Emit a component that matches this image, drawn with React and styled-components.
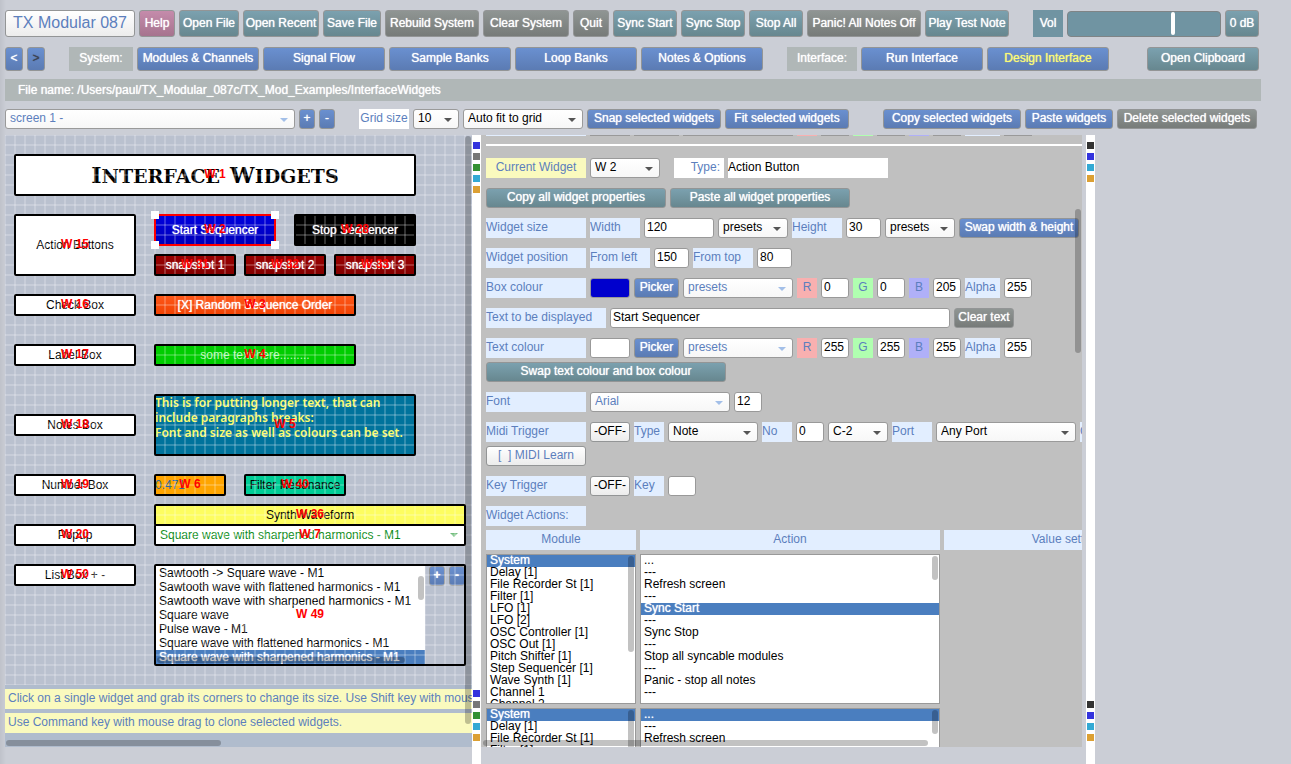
import React from "react";
import styled, { createGlobalStyle, css } from "styled-components";

const GlobalStyle = createGlobalStyle`
  *, *::before, *::after { box-sizing: border-box; }
  body {
    margin: 0;
    background: #cbced6;
    font-family: "Liberation Sans", Arial, sans-serif;
    font-size: 12px;
    color: #000;
  }
  button, input, select { font: inherit; color: inherit; margin: 0; }
`;

const tones = {
  blue: "linear-gradient(#6a90d0, #5b7bb3)",
  teal: "linear-gradient(#7ba1af, #67878f)",
  grey: "linear-gradient(#8f9593, #777b79)",
  pink: "linear-gradient(#c58bab, #a6738e)",
  white: "linear-gradient(#ffffff, #ececec)",
};

const accent = "#5c7fbd";
const heavier = css`text-shadow: 0 0 1px currentColor;`;

const Page = styled.div`
  display: flex;
  flex-direction: column;
  height: 100vh;
  padding: 10px 0 0 5px;
  overflow: hidden;
  background: linear-gradient(90deg, #bfc2ca, #cbced6 6px);
`;

const Toolbar = styled.div`
  display: flex;
  flex: none;
  gap: 4px;
  height: ${(p) => p.$height}px;
  margin-bottom: ${(p) => p.$after}px;
`;

const Button = styled.button`
  flex: none;
  width: ${(p) => p.$w}px;
  padding: 0 0 2px;
  border: 1px solid #939596;
  border-radius: 3px;
  background: ${(p) => tones[p.$tone || "blue"]};
  color: ${(p) => p.$color || "#fff"};
  text-align: center;
  white-space: nowrap;
  overflow: hidden;
  ${(p) => !p.$plain && heavier}
`;

const TitleButton = styled(Button)`
  font-size: 16px;
`;

const BarLabel = styled.span`
  display: flex;
  flex: none;
  align-items: center;
  justify-content: center;
  width: ${(p) => p.$w}px;
  margin-left: 20px;
  padding-bottom: 2px;
  background: ${(p) => p.$bg || "#b0b7b7"};
  color: ${(p) => p.$color || "#fff"};
  white-space: nowrap;
  ${(p) => !p.$plain && heavier}
`;

const Spacer = styled.span`
  flex: none;
  width: ${(p) => p.$w}px;
`;

const Volume = styled.input`
  flex: none;
  appearance: none;
  align-self: center;
  width: 154px;
  height: 26px;
  padding: 1px;
  border: 1px solid #7f8486;
  border-radius: 4px;
  background: #7094a2;
  &::-webkit-slider-thumb {
    appearance: none;
    width: 4px;
    height: 23px;
    border-radius: 2px;
    background: #fff;
  }
`;

const FileBar = styled.div`
  flex: none;
  height: 22px;
  margin: 0 30px 8px 0;
  padding-left: 13px;
  line-height: 22px;
  background: #b0b7b7;
  color: #fff;
  ${heavier}
`;

const SelectBox = styled.span`
  position: relative;
  display: flex;
  flex: none;
  width: ${(p) => p.$w}px;
  color: ${(p) => (p.$soft ? accent : "#000")};
  &::after {
    content: "";
    position: absolute;
    right: 7px;
    top: 50%;
    border: 4px solid transparent;
    border-top-color: ${(p) => (p.$soft ? "#a3bfe8" : "#555")};
    border-bottom-width: 0;
    margin-top: -1px;
    pointer-events: none;
  }
`;

const NativeSelect = styled.select`
  appearance: none;
  width: 100%;
  height: 20px;
  padding: 0 0 2px 4px;
  border: 1px solid #9a9a9a;
  border-radius: 3px;
  background: linear-gradient(#fff, #f7f7f7);
`;

function Select({ w, soft, label, id, value }) {
  return (
    <SelectBox $w={w} $soft={soft}>
      <NativeSelect id={id} aria-label={label} defaultValue={value}>
        <option>{value}</option>
      </NativeSelect>
    </SelectBox>
  );
}

/* ---------- workspace ---------- */

const Workspace = styled.main`
  display: grid;
  flex: 1;
  min-height: 0;
  grid-template-columns: minmax(0, 467fr) 9px minmax(0, 605fr) 9px;
  margin-right: 196px;
`;

const Rail = styled.div`
  display: flex;
  flex-direction: column;
  justify-content: space-between;
  padding: 7px 1px 23px;
  background: #fff;
`;

const Marks = styled.div`
  display: flex;
  flex-direction: column;
  gap: 4px;
`;

const Mark = styled.button`
  width: 7px;
  height: 7px;
  padding: 0;
  border: 0;
  background: ${(p) => p.$color};
`;

function SideRail({ colors }) {
  return (
    <Rail>
      {["top", "bottom"].map((end) => (
        <Marks key={end}>
          {colors.map((c) => (
            <Mark key={c} $color={c} aria-label={`Scroll mark ${end}`} />
          ))}
        </Marks>
      ))}
    </Rail>
  );
}

const Thumb = styled.div`
  position: absolute;
  z-index: 4;
  border-radius: 3px;
  background: rgba(0, 0, 0, 0.24);
`;

const VThumb = styled(Thumb)`
  right: 1px;
  top: ${(p) => p.$top}px;
  width: 6px;
  height: ${(p) => p.$length}px;
`;

const HThumb = styled(Thumb)`
  left: ${(p) => p.$left}px;
  bottom: 1px;
  width: ${(p) => p.$length}px;
  height: 6px;
`;

/* ---------- widget canvas ---------- */

const CanvasPanel = styled.section`
  position: relative;
  display: flex;
  flex-direction: column;
  gap: 4px;
  margin-bottom: 17px;
  overflow: hidden;
  background: #b0bccd;
`;

const Canvas = styled.div`
  position: relative;
  flex: none;
  height: 550px;
  background: #bac1cf;
`;

const GridLines = styled.div`
  position: absolute;
  inset: 0;
  z-index: 1;
  pointer-events: none;
  background-image: linear-gradient(rgba(255, 255, 255, 0.2) 2px, transparent 2px),
    linear-gradient(90deg, rgba(255, 255, 255, 0.2) 2px, transparent 2px);
  background-size: 10px 10px;
  background-position: -1px -1px;
`;

const placed = css`
  position: absolute;
  left: ${(p) => p.$x - 1}px;
  top: ${(p) => p.$y - 1}px;
  width: ${(p) => p.$w + 2}px;
  height: ${(p) => p.$h + 2}px;
`;

const WidgetBody = styled.div`
  ${placed}
  display: flex;
  align-items: center;
  justify-content: ${(p) => p.$justify || "center"};
  padding: 0 1px;
  border: 0;
  border-radius: 2px;
  background: ${(p) => p.$bg};
  color: ${(p) => p.$color || "#000"};
  white-space: nowrap;
`;

const ActionBody = styled(WidgetBody).attrs({ as: "button" })`
  ${heavier}
`;

const WidgetFrame = styled.div`
  ${placed}
  z-index: 2;
  display: flex;
  align-items: center;
  justify-content: center;
  border: 2px solid ${(p) => (p.$selected ? "#f00" : "#000")};
  border-radius: 2px;
  padding-bottom: 2px;
  color: #f00;
  font-weight: bold;
  pointer-events: none;
`;

const Handle = styled.i`
  position: absolute;
  ${(p) => p.$v}: -5px;
  ${(p) => p.$s}: -5px;
  width: 8px;
  height: 8px;
  background: #fff;
`;

const Heading = styled.h1`
  display: flex;
  gap: 10px;
  margin: 0;
  font: bold 19px "DejaVu Serif", serif;
  text-transform: uppercase;
`;

const HeadingWord = styled.span`
  display: block;
  &::first-letter { font-size: 22px; }
`;

const Notes = styled.p`
  align-self: flex-start;
  width: 100%;
  margin: 1px 0 0;
  font: 600 12px/15px "Noto Sans", sans-serif;
  white-space: pre-line;
`;

const PopupValue = styled.span`
  display: flex;
  flex: 1;
  align-items: center;
  justify-content: space-between;
  padding: 0 7px 0 5px;
  &::after {
    content: "";
    border: 4px solid transparent;
    border-top-color: #72bd7d;
    border-bottom-width: 0;
  }
`;

const WaveArea = styled.div`
  display: flex;
  align-items: flex-start;
  gap: 4px;
  width: 100%;
  height: 100px;
  padding-top: 1px;
`;

const WaveList = styled.ul`
  position: relative;
  flex: 1;
  height: 98px;
  margin: 0;
  padding: 0;
  overflow: hidden;
  list-style: none;
  background: #fff;
`;

const WaveItem = styled.li`
  height: 14px;
  padding-left: 4px;
  line-height: 14px;
  white-space: nowrap;
  background: ${(p) => (p.$on ? "#4a7ebf" : "transparent")};
  color: ${(p) => (p.$on ? "#fff" : "#000")};
  ${(p) => p.$on && heavier}
`;

const StepButton = styled(Button)`
  height: 20px;
  font-weight: bold;
`;

const waves = [
  "Sawtooth -> Square wave - M1",
  "Sawtooth wave with flattened harmonics - M1",
  "Sawtooth wave with sharpened harmonics - M1",
  "Square wave",
  "Pulse wave - M1",
  "Square wave with flattened harmonics - M1",
  "Square wave with sharpened harmonics - M1",
];

const darkRed = "linear-gradient(#9b0000, #820000)";

const widgets = [
  {
    id: "W 1", x: 10, y: 20, w: 400, h: 40, bg: "#fff",
    body: <Heading><HeadingWord>Interface</HeadingWord><HeadingWord>Widgets</HeadingWord></Heading>,
  },
  { id: "W 15", x: 10, y: 80, w: 120, h: 60, bg: "#fff", body: "Action Buttons" },
  { id: "W 2", x: 150, y: 80, w: 120, h: 30, bg: "linear-gradient(#0000e0, #0000b8)", color: "#fff", action: true, selected: true, body: "Start Sequencer" },
  { id: "W 28", x: 290, y: 80, w: 120, h: 30, bg: "#000", color: "#fff", action: true, body: "Stop Sequencer" },
  { id: "W 31", x: 150, y: 120, w: 80, h: 20, bg: darkRed, color: "#fff", action: true, body: "snapshot 1" },
  { id: "W 32", x: 240, y: 120, w: 80, h: 20, bg: darkRed, color: "#fff", action: true, body: "snapshot 2" },
  { id: "W 33", x: 330, y: 120, w: 80, h: 20, bg: darkRed, color: "#fff", action: true, body: "snapshot 3" },
  { id: "W 16", x: 10, y: 160, w: 120, h: 20, bg: "#fff", body: "Check Box" },
  { id: "W 3", x: 150, y: 160, w: 200, h: 20, bg: "linear-gradient(#ff5a1c, #f04000)", color: "#fff", action: true, body: "[X] Random Sequence Order" },
  { id: "W 17", x: 10, y: 210, w: 120, h: 20, bg: "#fff", body: "Label Box" },
  { id: "W 4", x: 150, y: 210, w: 200, h: 20, bg: "#00cd00", color: "#b8f5b8", body: "some text here........." },
  { id: "W 18", x: 10, y: 280, w: 120, h: 20, bg: "#fff", body: "Notes Box" },
  {
    id: "W 5", x: 150, y: 260, w: 260, h: 60, bg: "#00739c", color: "#fbfb6a",
    body: <Notes>{"This is for putting longer text, that can\ninclude paragraphs breaks:\nFont and size as well as colours can be set."}</Notes>,
  },
  { id: "W 19", x: 10, y: 340, w: 120, h: 20, bg: "#fff", body: "Number Box" },
  { id: "W 6", x: 150, y: 340, w: 70, h: 20, bg: "#ffa500", color: "#2c6aa0", justify: "flex-start", body: "0.471" },
  { id: "W 40", x: 240, y: 340, w: 100, h: 20, bg: "#00cd96", body: "Filter Resonance" },
  { id: "W 20", x: 10, y: 390, w: 120, h: 20, bg: "#fff", body: "Popup" },
  { id: "W 36", x: 150, y: 370, w: 310, h: 20, bg: "#fdfd60", body: "Synth Waveform" },
  { id: "W 7", x: 150, y: 390, w: 310, h: 20, bg: "#fff", color: "#0a8a14", body: <PopupValue>Square wave with sharpened harmonics - M1</PopupValue> },
  { id: "W 50", x: 10, y: 430, w: 120, h: 20, bg: "#fff", body: "List Box + -" },
  {
    id: "W 49", x: 150, y: 430, w: 310, h: 100, bg: "transparent",
    body: (
      <WaveArea>
        <WaveList role="listbox" aria-label="Synth waveform">
          {waves.map((name, i) => (
            <WaveItem key={name} role="option" aria-selected={i === 6} $on={i === 6}>{name}</WaveItem>
          ))}
          <VThumb $top={10} $length={24} />
          <HThumb $left={2} $length={248} />
        </WaveList>
        <StepButton $w={16}>+</StepButton>
        <StepButton $w={16}>-</StepButton>
      </WaveArea>
    ),
  },
];

const Hint = styled.p`
  flex: none;
  height: 20px;
  margin: 0;
  padding-left: 3px;
  line-height: 18px;
  white-space: nowrap;
  overflow: hidden;
  background: #fafabe;
  color: ${accent};
`;

function WidgetCanvas() {
  return (
    <CanvasPanel>
      <Canvas>
        {widgets.map((w) => {
          const Body = w.action ? ActionBody : WidgetBody;
          return (
            <Body
              key={w.id}
              $x={w.x} $y={w.y} $w={w.w} $h={w.h}
              $bg={w.bg} $color={w.color} $justify={w.justify}
            >
              {w.body}
            </Body>
          );
        })}
        <GridLines />
        {widgets.map((w) => (
          <WidgetFrame key={w.id} $x={w.x} $y={w.y} $w={w.w} $h={w.h} $selected={w.selected}>
            {w.id}
            {w.selected && (
              <>
                <Handle $v="top" $s="left" />
                <Handle $v="top" $s="right" />
                <Handle $v="bottom" $s="left" />
                <Handle $v="bottom" $s="right" />
              </>
            )}
          </WidgetFrame>
        ))}
      </Canvas>
      <Hint>Click on a single widget and grab its corners to change its size. Use Shift key with mouse to select several.</Hint>
      <Hint>Use Command key with mouse drag to clone selected widgets.</Hint>
      <VThumb $top={1} $length={588} />
      <HThumb $left={1} $length={215} />
    </CanvasPanel>
  );
}

/* ---------- properties panel ---------- */

const PropertiesPanel = styled.section`
  position: relative;
  margin: 0 4px 17px 0;
  padding-left: 5px;
  overflow: hidden;
  background: #c0c0c0;
`;

const CutRow = styled.div`
  display: flex;
  gap: 4px;
  height: 1px;
  margin-bottom: 8px;
`;

const Cut = styled.span`
  flex: none;
  width: ${(p) => p.$w}px;
  background: ${(p) => p.$bg || "#999"};
`;

const Divider = styled.hr`
  height: 2px;
  margin: 0 0 12px;
  border: 0;
  background: #fff;
`;

const Row = styled.div`
  display: flex;
  gap: 4px;
  height: 20px;
  margin-bottom: ${(p) => (p.$tight ? 4 : 10)}px;
`;

const FieldLabel = styled.label`
  flex: none;
  width: ${(p) => p.$w || 100}px;
  line-height: 18px;
  text-align: ${(p) => p.$align || "left"};
  background: ${(p) => p.$bg || "#e2eeff"};
  color: ${accent};
  white-space: nowrap;
`;

const TypeLabel = styled(FieldLabel)`
  margin-left: 10px;
  padding-right: 4px;
`;

const Value = styled.output`
  flex: none;
  width: 160px;
  line-height: 18px;
  background: #fff;
`;

const Input = styled.input`
  flex: none;
  width: ${(p) => p.$w}px;
  height: 20px;
  padding: 0 0 2px 2px;
  border: 1px solid #999;
  border-radius: 3px;
  background: #fff;
`;

const Swatch = styled.input`
  appearance: none;
  flex: none;
  width: 40px;
  height: 20px;
  padding: 0;
  border: 1px solid #999;
  border-radius: 3px;
  background: #fff;
  overflow: hidden;
  &::-webkit-color-swatch-wrapper { padding: 0; }
  &::-webkit-color-swatch { border: 0; }
`;

const ListHead = styled(FieldLabel).attrs({ as: "span" })`
  text-align: center;
`;

const ListBox = styled.ul`
  position: relative;
  flex: none;
  width: ${(p) => p.$w}px;
  height: 150px;
  margin: 0;
  padding: 0;
  border: 1px solid #999;
  overflow: hidden;
  list-style: none;
  background: #fff;
`;

const ListItem = styled.li`
  height: 12px;
  padding-left: 3px;
  line-height: 11px;
  white-space: nowrap;
  background: ${(p) => (p.$on ? "#4a7ebf" : "transparent")};
  color: ${(p) => (p.$on ? "#fff" : "#000")};
  ${(p) => p.$on && heavier}
`;

const ListRow = styled.div`
  display: flex;
  gap: 4px;
  margin-bottom: 4px;
`;

function List({ w, label, items, selected, thumb }) {
  return (
    <ListBox $w={w} role="listbox" aria-label={label}>
      {items.map((item, i) => (
        <ListItem key={i} role="option" aria-selected={i === selected} $on={i === selected}>{item}</ListItem>
      ))}
      <VThumb $top={1} $length={thumb} />
    </ListBox>
  );
}

const modules = [
  "System", "Delay [1]", "File Recorder St [1]", "Filter [1]", "LFO [1]", "LFO [2]",
  "OSC Controller [1]", "OSC Out [1]", "Pitch Shifter [1]", "Step Sequencer [1]",
  "Wave Synth [1]", "Channel 1", "Channel 2",
];

const actions = [
  "...", "---", "Refresh screen", "---", "Sync Start", "---", "Sync Stop", "---",
  "Stop all syncable modules", "---", "Panic - stop all notes", "---",
];

const tints = { R: "#f8b0b0", G: "#b0ffb0", B: "#b0b0f8" };

function ColourFields({ name, id, colour, rgb }) {
  return (
    <>
      <FieldLabel htmlFor={id}>{name}</FieldLabel>
      <Swatch type="color" id={id} defaultValue={colour} />
      <Button $w={45}>Picker</Button>
      <Select w={110} soft label={`${name} presets`} value="presets" />
      {["R", "G", "B"].map((c, i) => (
        <React.Fragment key={c}>
          <FieldLabel $w={20} $align="center" $bg={tints[c]} htmlFor={`${id}-${c}`}>{c}</FieldLabel>
          <Input $w={28} id={`${id}-${c}`} defaultValue={rgb[i]} />
        </React.Fragment>
      ))}
      <FieldLabel $w={35} htmlFor={`${id}-a`}>Alpha</FieldLabel>
      <Input $w={28} id={`${id}-a`} defaultValue="255" />
    </>
  );
}

function Properties() {
  return (
    <PropertiesPanel>
      <CutRow>
        <Cut $w={100} $bg="#e2eeff" />
        <Cut $w={40} />
        <Cut $w={45} />
        <Cut $w={110} />
        <Cut $w={20} $bg={tints.R} />
        <Cut $w={28} />
        <Cut $w={20} $bg={tints.G} />
        <Cut $w={28} />
        <Cut $w={20} $bg={tints.B} />
        <Cut $w={28} />
        <Cut $w={35} $bg="#e2eeff" />
        <Cut $w={28} />
      </CutRow>
      <Divider />
      <Row>
        <FieldLabel $align="center" $bg="#fafabe" htmlFor="current">Current Widget</FieldLabel>
        <Select w={70} id="current" value="W 2" />
        <TypeLabel $w={50} $align="right" $bg="#fff" htmlFor="type">Type:</TypeLabel>
        <Value id="type">Action Button</Value>
      </Row>
      <Row>
        <Button $tone="teal" $w={180}>Copy all widget properties</Button>
        <Button $tone="teal" $w={180}>Paste all widget properties</Button>
      </Row>
      <Row>
        <FieldLabel as="span">Widget size</FieldLabel>
        <FieldLabel $w={50} htmlFor="width">Width</FieldLabel>
        <Input $w={70} id="width" defaultValue="120" />
        <Select w={70} label="Width presets" value="presets" />
        <FieldLabel $w={50} htmlFor="height">Height</FieldLabel>
        <Input $w={35} id="height" defaultValue="30" />
        <Select w={70} label="Height presets" value="presets" />
        <Button $w={120}>Swap width &amp; height</Button>
      </Row>
      <Row>
        <FieldLabel as="span">Widget position</FieldLabel>
        <FieldLabel $w={60} htmlFor="left">From left</FieldLabel>
        <Input $w={35} id="left" defaultValue="150" />
        <FieldLabel $w={60} htmlFor="top">From top</FieldLabel>
        <Input $w={35} id="top" defaultValue="80" />
      </Row>
      <Row>
        <ColourFields name="Box colour" id="box" colour="#0000cd" rgb={[0, 0, 205]} />
      </Row>
      <Row>
        <FieldLabel $w={120} htmlFor="text">Text to be displayed</FieldLabel>
        <Input $w={340} id="text" defaultValue="Start Sequencer" />
        <Button $tone="grey" $w={60}>Clear text</Button>
      </Row>
      <Row $tight>
        <ColourFields name="Text colour" id="ink" colour="#ffffff" rgb={[255, 255, 255]} />
      </Row>
      <Row>
        <Button $tone="teal" $w={240}>Swap text colour and box colour</Button>
      </Row>
      <Row>
        <FieldLabel htmlFor="font">Font</FieldLabel>
        <Select w={140} soft id="font" value="Arial" />
        <Input $w={28} aria-label="Font size" defaultValue="12" />
      </Row>
      <Row $tight>
        <FieldLabel as="span">Midi Trigger</FieldLabel>
        <Button $tone="white" $color="#000" $plain $w={40}>-OFF-</Button>
        <FieldLabel $w={30} htmlFor="midi-type">Type</FieldLabel>
        <Select w={90} id="midi-type" value="Note" />
        <FieldLabel $w={30} htmlFor="midi-no">No</FieldLabel>
        <Input $w={28} id="midi-no" defaultValue="0" />
        <Select w={60} label="Note name" value="C-2" />
        <FieldLabel $w={40} htmlFor="port">Port</FieldLabel>
        <Select w={140} id="port" value="Any Port" />
        <FieldLabel as="span" $w={50}>Channel</FieldLabel>
      </Row>
      <Row>
        <Button $tone="white" $color={accent} $plain $w={100}>[&nbsp; ] MIDI Learn</Button>
      </Row>
      <Row>
        <FieldLabel as="span">Key Trigger</FieldLabel>
        <Button $tone="white" $color="#000" $plain $w={40}>-OFF-</Button>
        <FieldLabel $w={30} htmlFor="key">Key</FieldLabel>
        <Input $w={28} id="key" />
      </Row>
      <Row $tight>
        <FieldLabel as="span">Widget Actions:</FieldLabel>
      </Row>
      <Row $tight>
        <ListHead $w={150}>Module</ListHead>
        <ListHead $w={300}>Action</ListHead>
        <ListHead $w={250}>Value settings</ListHead>
      </Row>
      <ListRow>
        <List w={150} label="Module 1" items={modules} selected={0} thumb={96} />
        <List w={300} label="Action 1" items={actions} selected={4} thumb={24} />
      </ListRow>
      <ListRow>
        <List w={150} label="Module 2" items={modules} selected={0} thumb={96} />
        <List w={300} label="Action 2" items={actions} selected={0} thumb={24} />
      </ListRow>
      <VThumb $top={74} $length={144} />
      <HThumb $left={2} $length={445} />
    </PropertiesPanel>
  );
}

export default function App() {
  return (
    <Page>
      <GlobalStyle />
      <Toolbar $height={27} $after={10}>
        <TitleButton $tone="white" $color={accent} $plain $w={130}>TX Modular 087</TitleButton>
        <Button $tone="pink" $w={36}>Help</Button>
        <Button $tone="teal" $w={60}>Open File</Button>
        <Button $tone="teal" $w={76}>Open Recent</Button>
        <Button $tone="teal" $w={58}>Save File</Button>
        <Button $tone="grey" $w={94}>Rebuild System</Button>
        <Button $tone="grey" $w={86}>Clear System</Button>
        <Button $tone="grey" $w={36}>Quit</Button>
        <Button $tone="teal" $w={64}>Sync Start</Button>
        <Button $tone="teal" $w={64}>Sync Stop</Button>
        <Button $tone="teal" $w={54}>Stop All</Button>
        <Button $tone="grey" $w={114}>Panic! All Notes Off</Button>
        <Button $tone="teal" $w={84}>Play Test Note</Button>
        <BarLabel as="label" htmlFor="volume" $w={30} $bg="#7094a2">Vol</BarLabel>
        <Volume id="volume" type="range" min="0" max="100" defaultValue="70" />
        <Button $tone="teal" $w={34}>0 dB</Button>
      </Toolbar>
      <Toolbar as="nav" $height={24} $after={8}>
        <Button $w={18}>&lt;</Button>
        <Button $w={18} $color="#3c4250">&gt;</Button>
        <BarLabel $w={64}>System:</BarLabel>
        <Button $w={122}>Modules &amp; Channels</Button>
        <Button $w={122}>Signal Flow</Button>
        <Button $w={122}>Sample Banks</Button>
        <Button $w={122}>Loop Banks</Button>
        <Button $w={122}>Notes &amp; Options</Button>
        <BarLabel $w={70}>Interface:</BarLabel>
        <Button $w={122}>Run Interface</Button>
        <Button $w={122} $color="#fbfb78">Design Interface</Button>
        <Spacer $w={30} />
        <Button $tone="teal" $w={112}>Open Clipboard</Button>
      </Toolbar>
      <FileBar>File name: /Users/paul/TX_Modular_087c/TX_Mod_Examples/InterfaceWidgets</FileBar>
      <Toolbar $height={20} $after={6}>
        <Select w={290} soft label="Screen" value="screen 1 -" />
        <Button $w={16}>+</Button>
        <Button $w={16}>-</Button>
        <BarLabel as="label" htmlFor="grid" $plain $w={50} $bg="#fff" $color={accent}>Grid size</BarLabel>
        <Select w={46} id="grid" value="10" />
        <Select w={120} label="Grid mode" value="Auto fit to grid" />
        <Button $w={134}>Snap selected widgets</Button>
        <Button $w={124}>Fit selected widgets</Button>
        <Spacer $w={26} />
        <Button $w={138}>Copy selected widgets</Button>
        <Button $w={88}>Paste widgets</Button>
        <Button $tone="grey" $w={140}>Delete selected widgets</Button>
      </Toolbar>
      <Workspace>
        <WidgetCanvas />
        <SideRail colors={["#3333dd", "#777777", "#339133", "#33a9d4", "#dca033"]} />
        <Properties />
        <SideRail colors={["#333333", "#3333dd", "#33a9d4", "#dca033"]} />
      </Workspace>
    </Page>
  );
}
